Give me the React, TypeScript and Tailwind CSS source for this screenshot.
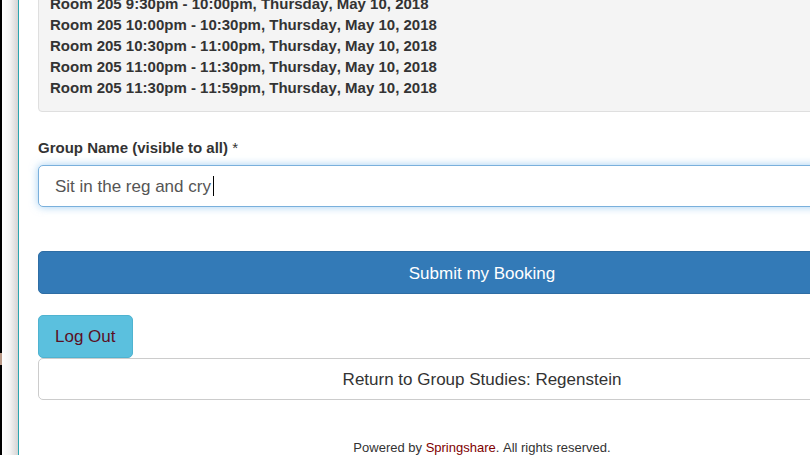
const slots = [
  "9:30pm - 10:00pm",
  "10:00pm - 10:30pm",
  "10:30pm - 11:00pm",
  "11:00pm - 11:30pm",
  "11:30pm - 11:59pm",
];

function BookingSummary() {
  return (
    <ul className="-mt-5 rounded-sm border border-[#dfdfdf] bg-[#f4f4f4] px-[11px] pt-3 pb-[13px] text-[15px] leading-[21px] font-bold">
      {slots.map((slot) => (
        <li key={slot}>Room 205 {slot}, Thursday, May 10, 2018</li>
      ))}
    </ul>
  );
}

function BookingForm() {
  return (
    <form className="mt-[25px]" onSubmit={(e) => e.preventDefault()}>
      <label htmlFor="group-name" className="block text-[15px] leading-[21px] font-bold">
        Group Name (visible to all) <span className="font-normal">*</span>
      </label>
      <div className="relative mt-[7px]">
        <input
          id="group-name"
          type="text"
          defaultValue="Sit in the reg and cry"
          className="block h-[42px] w-full rounded-[5px] border border-[#7ab0dc] bg-white px-4 pt-[2px] text-[17px] text-[#555] shadow-[0_0_8px_rgba(102,175,233,0.6)] outline-none"
        />
        <span className="absolute top-[11px] left-[175px] h-5 w-px bg-black" aria-hidden="true" />
      </div>
      <button
        type="submit"
        className="mt-11 block h-[43px] w-full rounded-[5px] border border-[#2e6da4] bg-[#337ab7] pt-[2px] text-[17px] text-white"
      >
        Submit my Booking
      </button>
    </form>
  );
}

export default function App() {
  return (
    <div className="flex min-h-screen overflow-hidden bg-white font-['Liberation_Sans',Arial,sans-serif] text-[#333] [font-kerning:none]">
      <div className="flex w-[2px] shrink-0 flex-col bg-black">
        <div className="mt-[353px] h-3 bg-[#b89886]" />
      </div>
      <div className="w-4 shrink-0 bg-linear-to-r from-white via-[#f3f3f3] to-[#d4d4d4]" />
      <main className="-mr-[116px] min-w-0 flex-1 border-l border-[#2aa5b0] pl-[19px]">
        <BookingSummary />
        <BookingForm />
        <button
          type="button"
          className="mt-[21px] block h-[43px] rounded-[5px] border border-[#4fb3d0] bg-[#5bc0de] px-4 text-[17px] text-[#5b0f24]"
        >
          Log Out
        </button>
        <button
          type="button"
          className="block h-[42px] w-full rounded-[5px] border border-[#ccc] bg-white pt-[2px] text-[17px]"
        >
          Return to Group Studies: Regenstein
        </button>
        <footer className="mt-[39px] text-center text-[13px] leading-[18px]">
          Powered by{" "}
          <a href="#springshare" className="text-[#800000]">
            Springshare
          </a>
          . All rights reserved.
        </footer>
      </main>
    </div>
  );
}
